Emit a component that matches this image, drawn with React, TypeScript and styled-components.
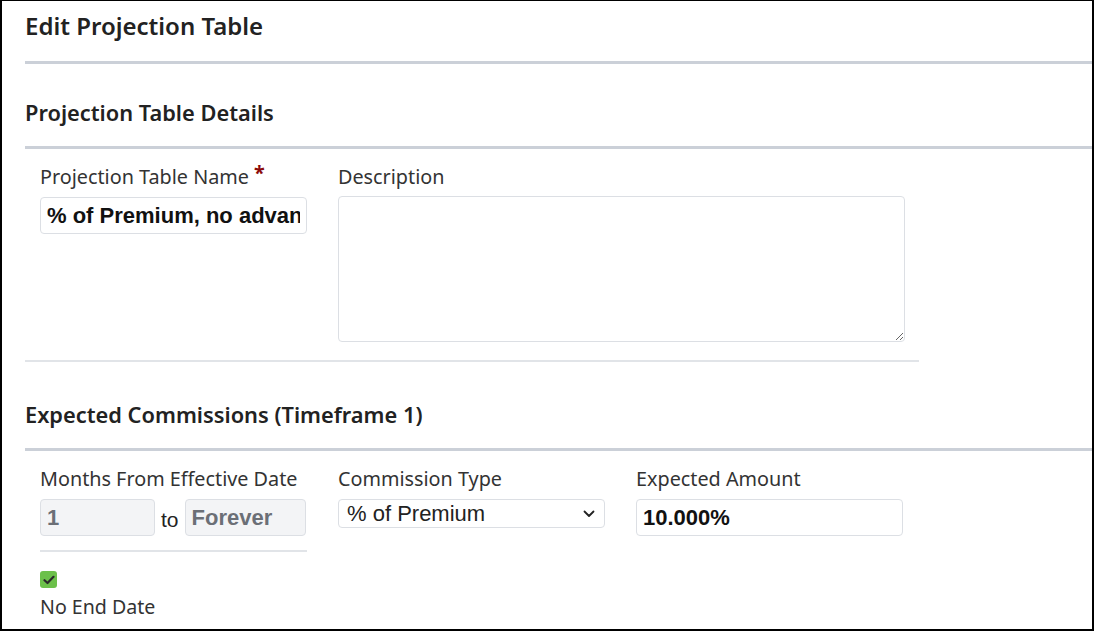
import React from "react";
import styled, { createGlobalStyle } from "styled-components";

const GlobalStyle = createGlobalStyle`
  html, body {
    margin: 0;
    padding: 0;
    background: #fff;
  }
  * {
    box-sizing: border-box;
  }
`;

const Frame = styled.div`
  width: 1094px;
  height: 631px;
  overflow: hidden;
  border-style: solid;
  border-color: #000;
  border-width: 1px 2px 2px 2px;
  padding-left: 23px;
  font-family: "Noto Sans", "Open Sans", sans-serif;
  color: #222;
  background: #fff;
`;

const PageTitle = styled.h1`
  margin: 0;
  padding: 9px 0 19px;
  font-size: 24px;
  line-height: 32px;
  font-weight: 600;
  border-bottom: 3px solid #cbd0d8;
`;

const SectionTitle = styled.h2<{ $top: number }>`
  margin: 0;
  padding: ${(p) => p.$top}px 0 18px;
  font-size: 21.8px;
  line-height: 30px;
  font-weight: 600;
  border-bottom: 3px solid #cbd0d8;
`;

const FieldRow = styled.div<{ $divider?: boolean }>`
  width: ${(p) => (p.$divider ? "894px" : "auto")};
  display: grid;
  grid-template-columns: 267px 267px 267px;
  column-gap: 31px;
  align-items: start;
  padding: 16px 0 18px 15px;
  border-bottom: ${(p) => (p.$divider ? "2px solid #e1e4e8" : "none")};
`;

const Field = styled.div<{ $span?: number }>`
  display: flex;
  flex-direction: column;
  grid-column: span ${(p) => p.$span ?? 1};
`;

const Label = styled.label`
  font-size: 19.8px;
  line-height: 24px;
  color: #333;
  margin-bottom: 8px;
`;

const Required = styled.span`
  color: #8b0a0a;
  font-weight: 700;
  margin-left: 5px;
  position: relative;
  top: -4px;
`;

const TextInput = styled.input<{ $width?: number }>`
  width: ${(p) => (p.$width ? `${p.$width}px` : "100%")};
  height: 37px;
  padding: 0 6px;
  border: 1px solid #dcdfe4;
  border-radius: 4px;
  font-family: "Liberation Sans", Arial, sans-serif;
  font-size: 22px;
  font-weight: 700;
  color: #111;
  background: #fff;
  outline: none;

  &:disabled {
    background: #f3f4f6;
    color: #6b6f76;
  }
`;

const TextArea = styled.textarea`
  width: 567px;
  height: 146px;
  border: 1px solid #dcdfe4;
  border-radius: 4px;
  margin-top: -1px;
  font-family: "Liberation Sans", Arial, sans-serif;
  font-size: 16px;
  outline: none;
`;

const SelectWrap = styled.div`
  position: relative;
  width: 100%;
  height: 29px;
`;

const Select = styled.select`
  width: 100%;
  height: 29px;
  appearance: none;
  padding: 0 28px 0 8px;
  border: 1px solid #dcdfe4;
  border-radius: 4px;
  font-family: "Liberation Sans", Arial, sans-serif;
  font-size: 22px;
  color: #222;
  background: #fff;
  outline: none;
`;

const Chevron = styled.svg`
  position: absolute;
  right: 10px;
  top: 11px;
  pointer-events: none;
`;

const RangeLine = styled.div`
  display: flex;
  align-items: center;
  gap: 6px;
  padding-bottom: 14px;
  border-bottom: 2px solid #e1e4e8;
`;

const To = styled.span`
  font-family: "Liberation Sans", Arial, sans-serif;
  font-size: 21px;
  color: #222;
  padding-top: 4px;
`;

const CheckArea = styled.div`
  display: flex;
  flex-direction: column;
  gap: 7px;
  padding-top: 19px;
`;

const CheckBox = styled.span`
  width: 17px;
  height: 17px;
  border-radius: 3px;
  background: #6cc04a;
  display: flex;
  align-items: center;
  justify-content: center;
`;

const CheckText = styled.span`
  font-size: 19.6px;
  line-height: 24px;
  color: #333;
`;

export default function App() {
  return (
    <>
      <GlobalStyle />
      <Frame>
        <PageTitle>Edit Projection Table</PageTitle>

        <SectionTitle $top={34}>Projection Table Details</SectionTitle>
        <FieldRow $divider>
          <Field>
            <Label>
              Projection Table Name<Required>*</Required>
            </Label>
            <TextInput defaultValue="% of Premium, no advance" />
          </Field>
          <Field $span={2}>
            <Label>Description</Label>
            <TextArea />
          </Field>
        </FieldRow>

        <SectionTitle $top={38}>Expected Commissions (Timeframe 1)</SectionTitle>
        <FieldRow>
          <Field>
            <Label>Months From Effective Date</Label>
            <RangeLine>
              <TextInput $width={115} disabled defaultValue="1" />
              <To>to</To>
              <TextInput $width={121} disabled defaultValue="Forever" />
            </RangeLine>
            <CheckArea>
              <CheckBox>
                <svg width="12" height="10" viewBox="0 0 12 10">
                  <path
                    d="M1.5 5.2 L4.5 8 L10.5 1.8"
                    fill="none"
                    stroke="#2a2a2a"
                    strokeWidth="2.2"
                    strokeLinecap="round"
                    strokeLinejoin="round"
                  />
                </svg>
              </CheckBox>
              <CheckText>No End Date</CheckText>
            </CheckArea>
          </Field>
          <Field>
            <Label>Commission Type</Label>
            <SelectWrap>
              <Select defaultValue="pct">
                <option value="pct">% of Premium</option>
                <option value="flat">Flat Amount</option>
              </Select>
              <Chevron width="12" height="8" viewBox="0 0 12 8">
                <path
                  d="M1.5 1.5 L6 6 L10.5 1.5"
                  fill="none"
                  stroke="#222"
                  strokeWidth="1.8"
                  strokeLinecap="round"
                  strokeLinejoin="round"
                />
              </Chevron>
            </SelectWrap>
          </Field>
          <Field>
            <Label>Expected Amount</Label>
            <TextInput defaultValue="10.000%" />
          </Field>
        </FieldRow>
      </Frame>
    </>
  );
}
